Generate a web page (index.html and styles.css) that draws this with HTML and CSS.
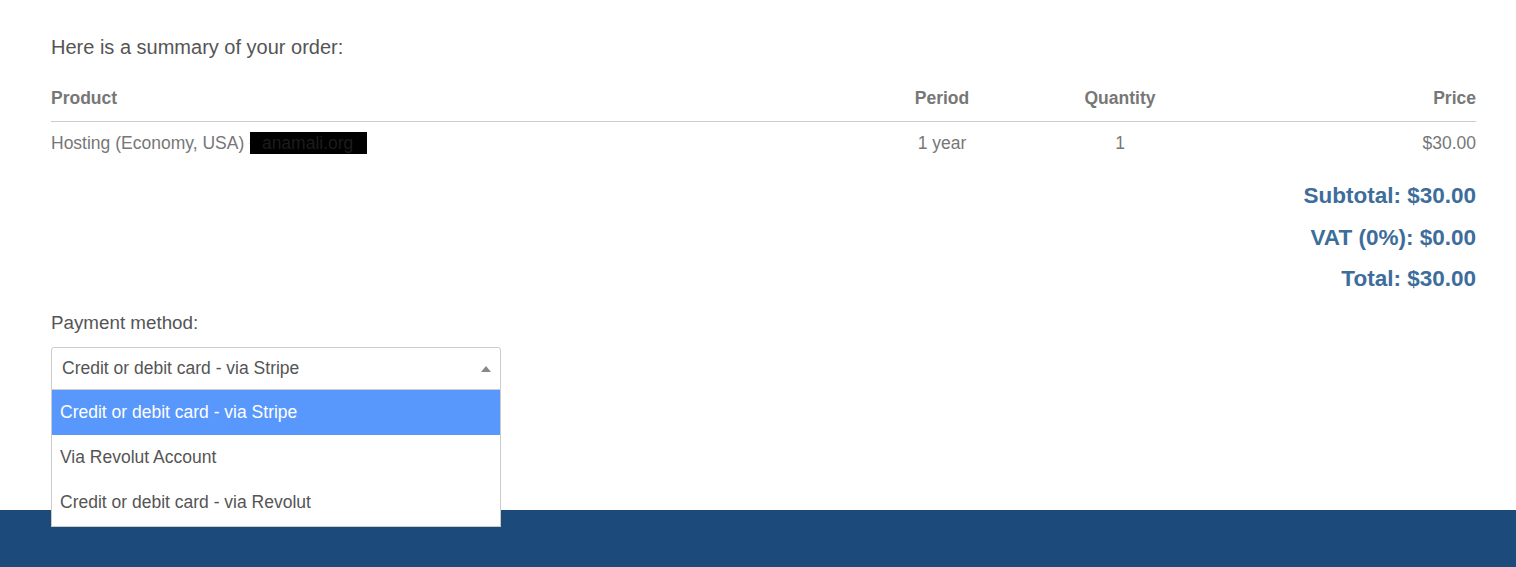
FILE: index.html
```html
<!DOCTYPE html>
<html>
<head>
<meta charset="utf-8">
<link rel="stylesheet" href="styles.css">
</head>
<body>
<main class="content">
  <p class="intro">Here is a summary of your order:</p>
  <table class="order">
    <thead>
      <tr>
        <th class="c-product">Product</th>
        <th class="c-period">Period</th>
        <th class="c-qty">Quantity</th>
        <th class="c-price">Price</th>
      </tr>
    </thead>
    <tbody>
      <tr>
        <td class="c-product">Hosting (Economy, USA) -<span class="redact">anamali.org</span></td>
        <td class="c-period">1 year</td>
        <td class="c-qty">1</td>
        <td class="c-price">$30.00</td>
      </tr>
    </tbody>
  </table>
  <div class="totals">
    <div class="total-line">Subtotal: $30.00</div>
    <div class="total-line">VAT (0%): $0.00</div>
    <div class="total-line">Total: $30.00</div>
  </div>
  <div class="payment">
    <label class="pay-label">Payment method:</label>
    <div class="select-wrap">
      <div class="select">
        <span class="select-value">Credit or debit card - via Stripe</span>
        <svg class="arrow" width="10" height="6" viewBox="0 0 10 6"><path d="M0 6 L5 0 L10 6 Z" fill="#888"/></svg>
      </div>
      <ul class="dropdown">
        <li class="opt active">Credit or debit card - via Stripe</li>
        <li class="opt">Via Revolut Account</li>
        <li class="opt">Credit or debit card - via Revolut</li>
      </ul>
    </div>
  </div>
</main>
<footer class="footer"></footer>
</body>
</html>
```
FILE: styles.css
```css
* { box-sizing: border-box; }
html, body { margin: 0; padding: 0; background: #fff; }
body {
  font-family: "Liberation Sans", Arial, sans-serif;
  color: #666;
  height: 567px;
  overflow: hidden;
  display: flex;
  flex-direction: column;
}
.content {
  padding: 35px 40px 0 51px;
  height: 510px;
}
.intro {
  margin: 0;
  font-size: 20px;
  color: #555;
  line-height: 24px;
}
.order {
  width: 1425px;
  border-collapse: collapse;
  margin-top: 28px;
  font-size: 17.5px;
}
.order th {
  font-weight: bold;
  color: #777;
  padding: 0 0 12px 0;
  border-bottom: 1px solid #ccc;
  line-height: 22px;
}
.order td {
  padding: 10px 0 0 0;
  line-height: 22px;
  color: #777;
}
.c-product { text-align: left; }
.c-period { width: 180px; text-align: center; }
.c-qty { width: 176px; text-align: center; }
.c-price { width: 268px; text-align: right; }
.redact {
  display: inline-block;
  vertical-align: top;
  margin-left: -5px;
  width: 117px;
  height: 22px;
  background: #000;
  color: #1c1c1c;
  padding: 0 0 0 12px;
  white-space: nowrap;
  overflow: hidden;
}
.totals {
  width: 1425px;
  text-align: right;
  margin-top: 21px;
}
.total-line {
  font-size: 22.5px;
  font-weight: bold;
  color: #3d6d9a;
  line-height: 41.5px;
}
.payment { margin-top: 12px; }
.pay-label {
  display: block;
  font-size: 18.8px;
  color: #555;
  line-height: 22px;
}
.select-wrap {
  position: relative;
  width: 450px;
  margin-top: 13px;
}
.select {
  height: 43px;
  border: 1px solid #ccc;
  border-radius: 3px 3px 0 0;
  display: flex;
  align-items: center;
  justify-content: space-between;
  padding: 0 9px 0 10px;
  font-size: 17.5px;
  color: #555;
}
.arrow { margin-top: 1px; }
.dropdown {
  position: absolute;
  left: 0;
  top: 43px;
  width: 450px;
  margin: 0;
  padding: 0 0 1px;
  list-style: none;
  background: #fff;
  border: 1px solid #ccc;
  border-top: none;
  z-index: 5;
}
.opt {
  height: 45px;
  display: flex;
  align-items: center;
  padding: 0 8px;
  font-size: 17.5px;
  color: #555;
}
.opt.active {
  background: #5897fb;
  color: #fff;
}
.footer {
  height: 57px;
  background: #1c4a7a;
}
```
